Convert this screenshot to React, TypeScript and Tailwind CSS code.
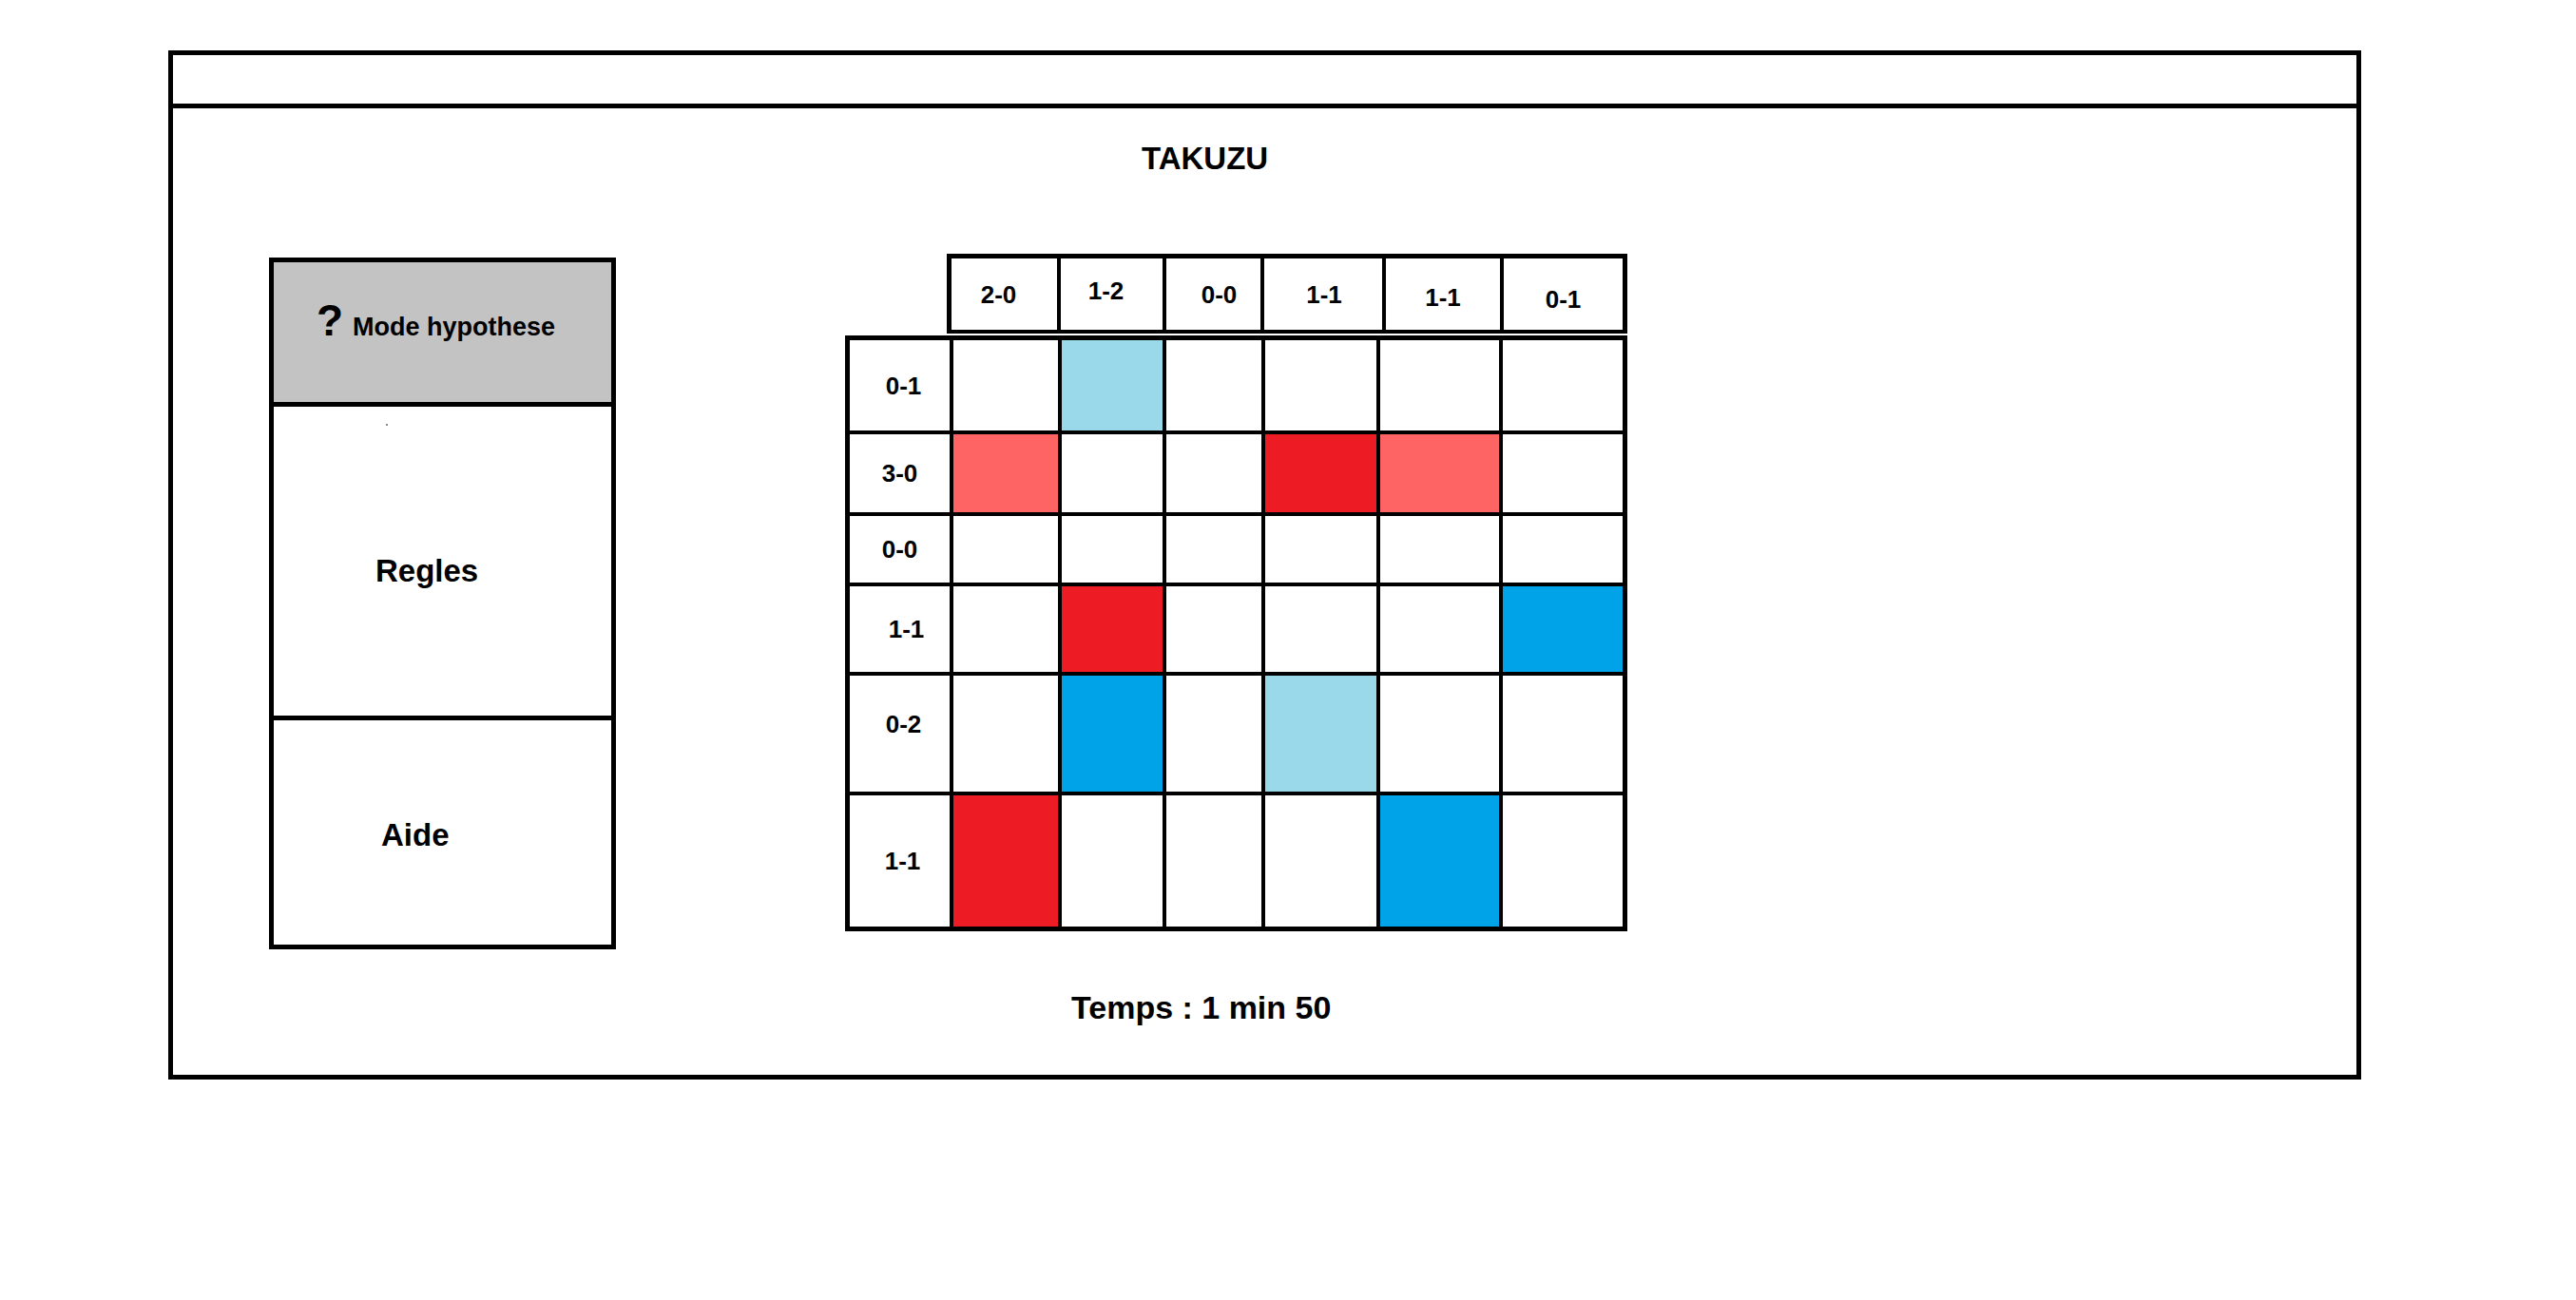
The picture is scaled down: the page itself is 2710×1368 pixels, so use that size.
import React from "react";

// cell colours, as in the mockup (paint palette)
const tone: Record<string, string> = {
  "": "bg-white",
  r: "bg-[#ed1c24]",
  s: "bg-[#ff6464]",
  b: "bg-[#00a2e8]",
  l: "bg-[#99d9ea]",
};

const colHeaders = [
  { text: "2-0", cls: "pr-[12px]" },
  { text: "1-2", cls: "pr-[12px] pb-[8px]" },
  { text: "0-0", cls: "pl-[12px]" },
  { text: "1-1", cls: "pl-[2px]" },
  { text: "1-1", cls: "pt-[6px]" },
  { text: "0-1", cls: "pt-[10px]" },
];

const rows = [
  { label: "0-1", pad: "pl-[8px]", cells: ["", "l", "", "", "", ""] },
  { label: "3-0", pad: "", cells: ["s", "", "", "r", "s", ""] },
  { label: "0-0", pad: "", cells: ["", "", "", "", "", ""] },
  { label: "1-1", pad: "pl-[14px]", cells: ["", "r", "", "", "", "b"] },
  { label: "0-2", pad: "pl-[8px] pb-[20px]", cells: ["", "b", "", "l", "", ""] },
  { label: "1-1", pad: "pl-[6px]", cells: ["r", "", "", "", "b", ""] },
];

function SidePanel() {
  return (
    <div className="mt-[4px] ml-[101px] w-[365px] h-[728px] border-[5px] border-black flex flex-col">
      <div className="h-[152px] bg-[#c3c3c3] border-b-[5px] border-black pt-[38px] pl-[45px]">
        <div className="flex items-baseline">
          <span className="text-[46px] leading-none font-bold">?</span>
          <span className="ml-[10px] text-[27px] leading-none font-bold">Mode hypothese</span>
        </div>
      </div>
      <div className="h-[330px] border-b-[5px] border-black flex flex-col">
        <div className="ml-[118px] mt-[18px] w-[2px] h-[2px] bg-[#888]" />
        <span className="ml-[107px] mt-[136px] text-[33px] leading-none font-bold">Regles</span>
      </div>
      <div className="flex-1 flex flex-col">
        <span className="ml-[113px] mt-[104px] text-[33px] leading-none font-bold">Aide</span>
      </div>
    </div>
  );
}

function Board() {
  return (
    <div className="ml-[241px] flex flex-col">
      <div className="ml-[107px] w-[716px] bg-black pt-[5px] px-[5px] pb-[4px] grid grid-cols-[111px_107px_99px_124px_120px_125px] grid-rows-[75px] gap-x-[4px]">
        {colHeaders.map((h, i) => (
          <div key={i} className={`bg-white flex items-center justify-center text-[26px] leading-none font-bold ${h.cls}`}>
            {h.text}
          </div>
        ))}
      </div>
      <div className="mt-[2px] w-[823px] bg-black p-[5px] grid grid-cols-[105px_110px_106px_100px_117px_125px_126px] grid-rows-[95px_82px_70px_90px_122px_138px] gap-[4px]">
        {rows.map((row, r) => (
          <React.Fragment key={r}>
            <div className={`bg-white flex items-center justify-center text-[26px] leading-none font-bold ${row.pad}`}>
              {row.label}
            </div>
            {row.cells.map((c, i) => (
              <div key={i} className={tone[c]} />
            ))}
          </React.Fragment>
        ))}
      </div>
      <div className="mt-[63px] pl-[238px] text-[34px] leading-none font-bold">Temps : 1 min 50</div>
    </div>
  );
}

export default function App() {
  return (
    <div className="w-[2710px] h-[1368px] bg-white text-black font-['Liberation_Sans',Arial,sans-serif] pl-[177px] pt-[53px]">
      <div className="w-[2307px] h-[1083px] border-[5px] border-black flex flex-col">
        <div className="h-[56px] border-b-[5px] border-black" />
        <div className="pt-[36px] pl-[1019px] text-[33px] leading-none font-bold">TAKUZU</div>
        <div className="mt-[84px] flex items-start">
          <SidePanel />
          <Board />
        </div>
      </div>
    </div>
  );
}
